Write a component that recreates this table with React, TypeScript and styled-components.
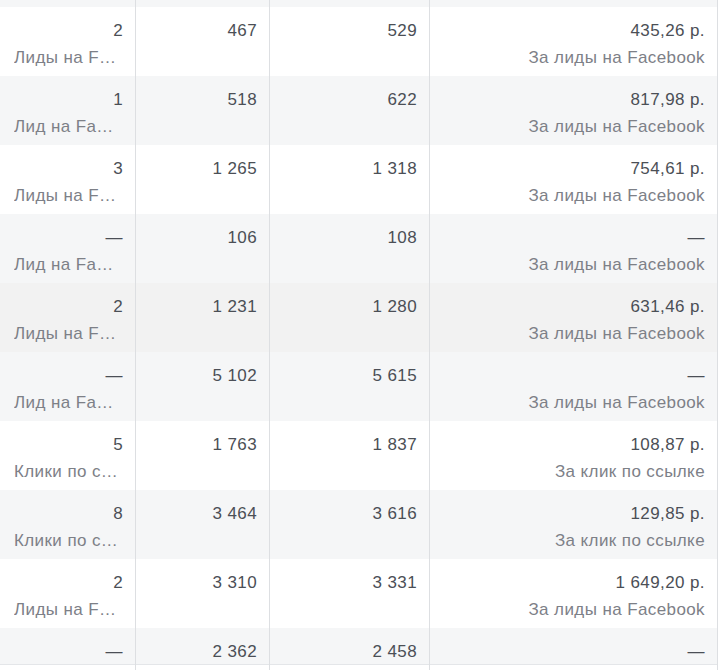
import React from 'react';
import styled, { createGlobalStyle } from 'styled-components';

type Row = {
  results: string;
  resultsLabel?: string;
  reach: string;
  impressions: string;
  cost: string;
  costLabel?: string;
  tone: 'white' | 'gray' | 'hover';
};

const rows: Row[] = [
  { results: '2', resultsLabel: 'Лиды на Facebook', reach: '467', impressions: '529', cost: '435,26 р.', costLabel: 'За лиды на Facebook', tone: 'white' },
  { results: '1', resultsLabel: 'Лид на Facebook', reach: '518', impressions: '622', cost: '817,98 р.', costLabel: 'За лиды на Facebook', tone: 'gray' },
  { results: '3', resultsLabel: 'Лиды на Facebook', reach: '1 265', impressions: '1 318', cost: '754,61 р.', costLabel: 'За лиды на Facebook', tone: 'white' },
  { results: '—', resultsLabel: 'Лид на Facebook', reach: '106', impressions: '108', cost: '—', costLabel: 'За лиды на Facebook', tone: 'gray' },
  { results: '2', resultsLabel: 'Лиды на Facebook', reach: '1 231', impressions: '1 280', cost: '631,46 р.', costLabel: 'За лиды на Facebook', tone: 'hover' },
  { results: '—', resultsLabel: 'Лид на Facebook', reach: '5 102', impressions: '5 615', cost: '—', costLabel: 'За лиды на Facebook', tone: 'gray' },
  { results: '5', resultsLabel: 'Клики по ссылке', reach: '1 763', impressions: '1 837', cost: '108,87 р.', costLabel: 'За клик по ссылке', tone: 'white' },
  { results: '8', resultsLabel: 'Клики по ссылке', reach: '3 464', impressions: '3 616', cost: '129,85 р.', costLabel: 'За клик по ссылке', tone: 'gray' },
  { results: '2', resultsLabel: 'Лиды на Facebook', reach: '3 310', impressions: '3 331', cost: '1 649,20 р.', costLabel: 'За лиды на Facebook', tone: 'white' },
  { results: '—', reach: '2 362', impressions: '2 458', cost: '—', tone: 'gray' },
];

const backgrounds = {
  white: '#ffffff',
  gray: '#f5f6f7',
  hover: '#f2f2f2',
};

const GlobalStyle = createGlobalStyle`
  html, body {
    margin: 0;
    padding: 0;
    background: #ffffff;
  }
  body {
    font-family: 'Liberation Sans', Arial, sans-serif;
    overflow: hidden;
  }
`;

const Table = styled.div`
  width: 722px;
  height: 670px;
  overflow: hidden;
`;

const TableRow = styled.div<{ $tone: Row['tone']; $compact?: boolean }>`
  display: grid;
  grid-template-columns: 136px 134px 160px 288px 4px;
  height: ${({ $compact }) => ($compact ? '37px' : '69px')};
  background: ${({ $tone }) => backgrounds[$tone]};
  border-bottom: ${({ $compact }) => ($compact ? '1px solid #e4e6e9' : 'none')};
  box-sizing: border-box;
`;

const EdgeRow = styled(TableRow)`
  height: 7px;
`;

const Cell = styled.div`
  box-sizing: border-box;
  border-right: 1px solid #dddfe2;
  padding: 10px 12px 0 14px;
  text-align: right;
  min-width: 0;
`;

const Spacer = styled.div`
  background: #ffffff;
`;

const Value = styled.div`
  font-size: 17px;
  letter-spacing: 0.4px;
  line-height: 27px;
  color: #4b4f56;
  white-space: nowrap;
`;

const Label = styled.div`
  font-size: 17px;
  letter-spacing: 0.4px;
  line-height: 27px;
  color: #7d8087;
  white-space: nowrap;
  overflow: hidden;
  text-overflow: ellipsis;
  text-align: right;
`;

// первая колонка: подпись обрезается многоточием
const TruncLabel = styled(Label)`
  text-align: left;
  padding-right: 4px;
`;

export default function App() {
  return (
    <Table>
      <GlobalStyle />
      <EdgeRow $tone="gray">
        <Cell />
        <Cell />
        <Cell />
        <Cell />
        <Spacer />
      </EdgeRow>
      {rows.map((row, i) => {
        const compact = !row.resultsLabel;
        return (
          <TableRow key={i} $tone={row.tone} $compact={compact}>
            <Cell>
              <Value>{row.results}</Value>
              {row.resultsLabel && <TruncLabel>{row.resultsLabel}</TruncLabel>}
            </Cell>
            <Cell>
              <Value>{row.reach}</Value>
            </Cell>
            <Cell>
              <Value>{row.impressions}</Value>
            </Cell>
            <Cell>
              <Value>{row.cost}</Value>
              {row.costLabel && <Label>{row.costLabel}</Label>}
            </Cell>
            <Spacer />
          </TableRow>
        );
      })}
      <TableRow $tone="white">
        <Cell />
        <Cell />
        <Cell />
        <Cell />
        <Spacer />
      </TableRow>
    </Table>
  );
}
